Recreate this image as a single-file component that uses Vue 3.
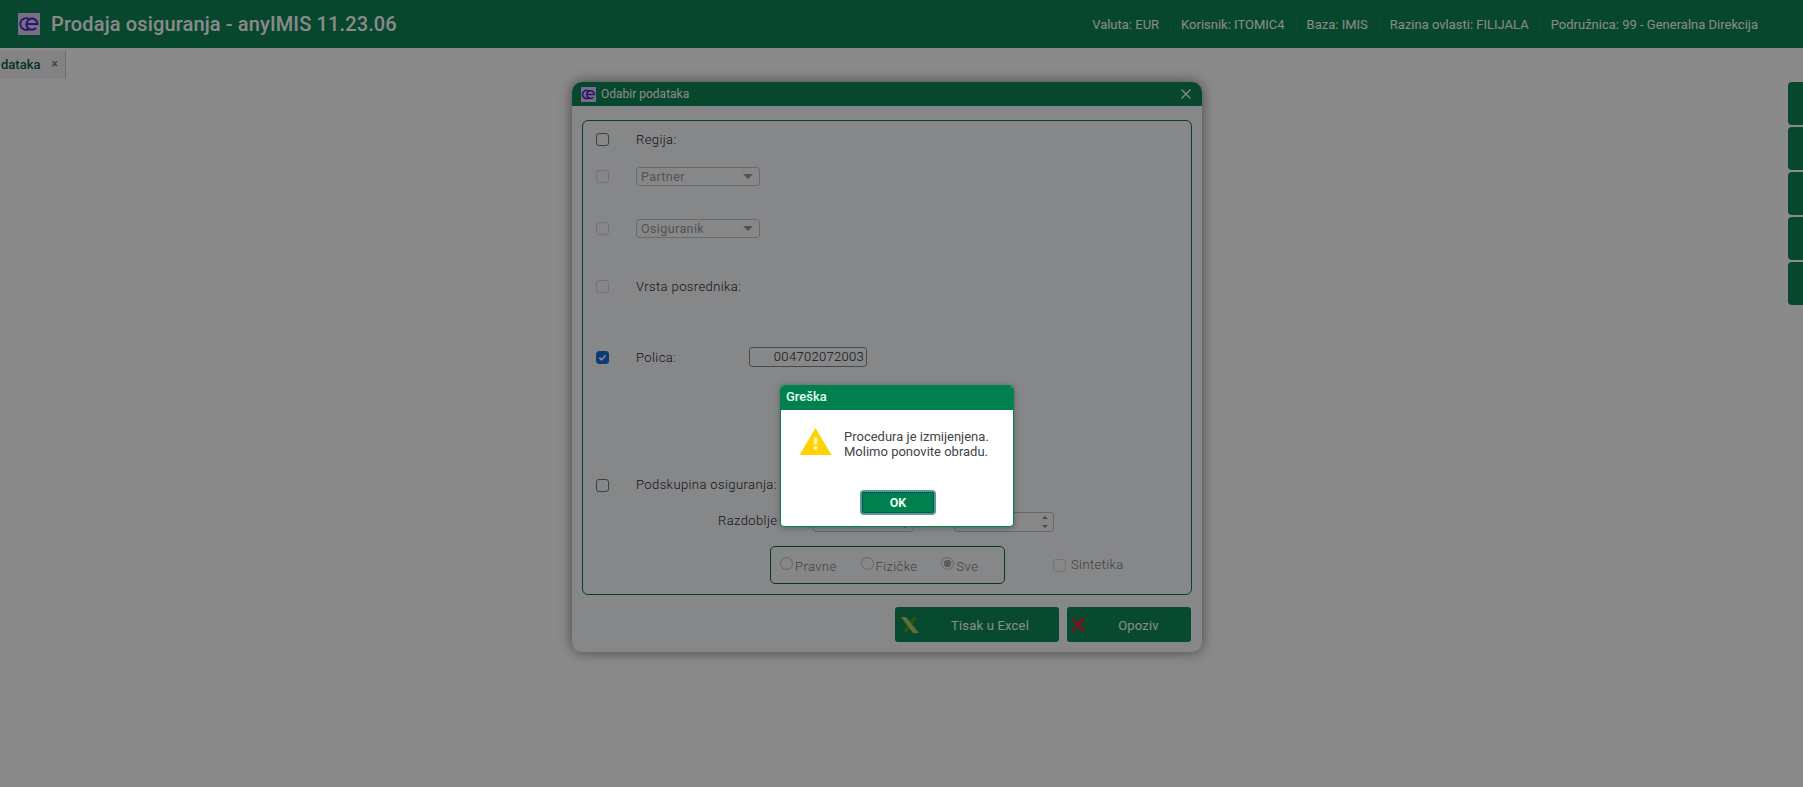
<script setup>
const info = [
  'Valuta: EUR',
  'Korisnik: ITOMIC4',
  'Baza: IMIS',
  'Razina ovlasti: FILIJALA',
  'Podružnica: 99 - Generalna Direkcija'
]
const sideTabs = [1, 2, 3, 4, 5]
</script>

<template>
  <div class="page">
    <header class="topbar">
      <svg class="logo" viewBox="0 0 22 22">
        <rect width="22" height="22" fill="#dccff5" />
        <path d="M11.4 6.2A5.8 5.8 0 1 0 11.4 15.8" fill="none" stroke="#4a2ac8" stroke-width="2" />
        <path d="M8.5 11H19.6A5.6 5.6 0 1 0 18 15" fill="none" stroke="#4a2ac8" stroke-width="2" />
      </svg>
      <h1 class="app-title">Prodaja osiguranja - anyIMIS 11.23.06</h1>
      <ul class="info">
        <li v-for="item in info" :key="item">{{ item }}</li>
      </ul>
    </header>

    <nav class="tabbar">
      <div class="tab">
        <span class="tab-name">dataka</span>
        <span class="tab-x">×</span>
      </div>
    </nav>

    <aside class="side-tabs">
      <div v-for="t in sideTabs" :key="t" class="side-tab"></div>
    </aside>

    <section class="dialog">
      <div class="dialog-head">
        <svg class="logo small" viewBox="0 0 22 22">
          <rect width="22" height="22" fill="#dccff5" />
          <path d="M11.4 6.2A5.8 5.8 0 1 0 11.4 15.8" fill="none" stroke="#4a2ac8" stroke-width="2.4" />
          <path d="M8.5 11H19.6A5.6 5.6 0 1 0 18 15" fill="none" stroke="#4a2ac8" stroke-width="2.4" />
        </svg>
        <span class="dialog-title">Odabir podataka</span>
        <svg class="close" viewBox="0 0 12 12">
          <path d="M1.5 1.5l9 9M10.5 1.5l-9 9" stroke="#fff" stroke-width="1.3" />
        </svg>
      </div>

      <div class="dialog-body">
        <div class="fields">
          <div class="row r1">
            <span class="check"></span>
            <label>Regija:</label>
          </div>
          <div class="row r2">
            <span class="check off"></span>
            <div class="select">Partner<i class="caret"></i></div>
          </div>
          <div class="row r3">
            <span class="check off"></span>
            <div class="select">Osiguranik<i class="caret"></i></div>
          </div>
          <div class="row r4">
            <span class="check off"></span>
            <label>Vrsta posrednika:</label>
          </div>
          <div class="row r5">
            <span class="check on">
              <svg viewBox="0 0 14 14"><path d="M3 7.2l2.8 2.8L11 4.2" fill="none" stroke="#fff" stroke-width="2" /></svg>
            </span>
            <label class="polica-label">Polica:</label>
            <div class="input">004702072003</div>
          </div>
          <div class="row r6">
            <span class="check"></span>
            <label>Podskupina osiguranja:</label>
          </div>
          <div class="row r7">
            <label class="period-label">Razdoblje</label>
            <div class="spin first"><i class="arrow up"></i><i class="arrow down"></i></div>
            <div class="spin"><i class="arrow up"></i><i class="arrow down"></i></div>
          </div>
          <div class="row r8">
            <div class="radios">
              <span class="radio-item"><i class="radio"></i>Pravne</span>
              <span class="radio-item"><i class="radio"></i>Fizičke</span>
              <span class="radio-item"><i class="radio sel"></i>Sve</span>
            </div>
            <span class="check off"></span>
            <label class="muted">Sintetika</label>
          </div>
        </div>

        <div class="actions">
          <button class="act excel">
            <svg class="act-icon xl" viewBox="0 0 20 18">
              <path d="M17 1h-4L3 16l4 1z" fill="#4f9a1e" />
              <path d="M1 1h5l13 16h-6z" fill="#a8cc6e" />
            </svg>
            <span>Tisak u Excel</span>
          </button>
          <button class="act cancel">
            <svg class="act-icon" viewBox="0 0 18 18">
              <path d="M3 3l11 12M14 2L3 15" stroke="#d42a30" stroke-width="3" />
            </svg>
            <span>Opoziv</span>
          </button>
        </div>
      </div>
    </section>

    <div class="overlay"></div>

    <section class="alert">
      <div class="alert-head">Greška</div>
      <div class="alert-body">
        <svg class="warn" viewBox="0 0 34 30">
          <path d="M17 1L33.5 29H.5z" fill="#ffd200" />
          <rect x="15.3" y="11" width="3.6" height="7" fill="#fff3b0" />
          <rect x="15.3" y="20" width="3.6" height="3.6" fill="#fff3b0" />
        </svg>
        <p>Procedura je izmijenjena.<br>Molimo ponovite obradu.</p>
      </div>
      <div class="alert-foot">
        <button class="ok">OK</button>
      </div>
    </section>
  </div>
</template>

<style>
html, body {
  margin: 0;
  background: #fff;
}
</style>

<style scoped>
.page {
  position: relative;
  width: 1803px;
  height: 787px;
  overflow: hidden;
  background: #fff;
  font-family: Roboto, "Liberation Sans", sans-serif;
  color: #222;
}

.topbar {
  height: 48px;
  background: #0c8356;
  display: flex;
  align-items: center;
  padding: 0 45px 0 18px;
  box-sizing: border-box;
}
.logo {
  width: 22px;
  height: 22px;
  flex: none;
}
.logo.small {
  width: 15px;
  height: 15px;
}
.app-title {
  margin: 0 0 0 11px;
  font-size: 20px;
  font-weight: 500;
  letter-spacing: .13px;
  color: #fff;
}
.info {
  margin: 0 0 0 auto;
  padding: 0;
  list-style: none;
  display: flex;
  font-size: 13px;
  color: #fff;
}
.info li + li {
  margin-left: 11px;
  padding-left: 10px;
  border-left: 1px solid rgba(255, 255, 255, .08);
}

.tabbar {
  height: 33px;
  padding-top: 3px;
  box-sizing: border-box;
  background: #fff;
}
.tab {
  width: 66px;
  height: 28px;
  box-sizing: border-box;
  background: #f2f3f6;
  border-right: 1px solid #ccc;
  display: flex;
  align-items: center;
  padding: 0 0 2px 1px;
  font-size: 13px;
  font-weight: 500;
  color: #0a5a3c;
}
.tab-x {
  margin-left: 11px;
  font-size: 12px;
  color: #777;
}

.side-tabs {
  position: absolute;
  right: 0;
  top: 82px;
  display: flex;
  flex-direction: column;
  gap: 2px;
}
.side-tab {
  width: 15px;
  height: 43px;
  background: #0c8356;
  border-radius: 4px 0 0 4px;
}

.dialog {
  position: absolute;
  left: 572px;
  top: 82px;
  width: 630px;
  height: 570px;
  background: #f7fafe;
  border-radius: 10px;
  overflow: hidden;
  box-shadow: 0 0 14px rgba(0, 0, 0, .5);
}
.dialog-head {
  height: 24px;
  background: #0c8356;
  display: flex;
  align-items: center;
  padding: 0 10px 0 9px;
  color: #fff;
  font-size: 12px;
}
.dialog-title {
  margin-left: 5px;
}
.close {
  width: 12px;
  height: 12px;
  margin-left: auto;
}
.dialog-body {
  padding: 14px 10px 0;
}
.fields {
  height: 475px;
  box-sizing: border-box;
  border: 1px solid #0a7550;
  border-radius: 6px;
  padding: 0 13px;
}
.row {
  display: flex;
  align-items: center;
  font-size: 13px;
  font-weight: 300;
  letter-spacing: .4px;
}
.row label {
  color: #1f1f1f;
}
.row .check {
  margin-right: 27px;
}
.r1 { height: 32px; margin-top: 2px; }
.r2 { height: 28px; margin-top: 7px; }
.r3 { height: 28px; margin-top: 24px; }
.r4 { height: 28px; margin-top: 30px; }
.r5 { height: 28px; margin-top: 43px; }
.r6 { height: 28px; margin-top: 99px; }
.r6 .check { margin-top: 2px; }
.r7 { height: 28px; margin-top: 8px; }
.r8 { height: 40px; margin-top: 11px; }

.check {
  width: 11px;
  height: 11px;
  border: 1px solid #777;
  border-radius: 3px;
  flex: none;
  display: flex;
}
.check.off {
  border-color: #d5d5d8;
}
.check.on {
  background: #1a6ed8;
  border-color: #1a6ed8;
}
.check.on svg {
  width: 100%;
  height: 100%;
}

.select {
  width: 124px;
  height: 19px;
  box-sizing: border-box;
  border: 1px solid #c4c4c4;
  border-radius: 3px;
  padding-left: 4px;
  line-height: 17px;
  font-size: 12.5px;
  font-weight: 400;
  color: #999;
  position: relative;
}
.caret {
  position: absolute;
  right: 6px;
  top: 6px;
  border: 5px solid transparent;
  border-top-color: #999;
  border-bottom: 0;
}

.polica-label {
  width: 113px;
}
.input {
  width: 118px;
  height: 20px;
  box-sizing: border-box;
  border: 1px solid #888;
  border-radius: 3px;
  text-align: right;
  padding-right: 2px;
  line-height: 18px;
  font-size: 13px;
  letter-spacing: .3px;
  color: #1f1f1f;
}

.row .period-label {
  margin-left: 122px;
}
.spin {
  width: 100px;
  height: 20px;
  box-sizing: border-box;
  border: 1px solid #c4c4c4;
  border-radius: 3px;
  margin: 4px 0 0 40px;
  position: relative;
}
.spin.first {
  width: 101px;
  margin-left: 36px;
}
.arrow {
  position: absolute;
  right: 5px;
  border: 3px solid transparent;
}
.arrow.up {
  top: 3px;
  border-bottom-color: #888;
  border-top: 0;
}
.arrow.down {
  bottom: 3px;
  border-top-color: #888;
  border-bottom: 0;
}

.radios {
  width: 235px;
  height: 38px;
  box-sizing: border-box;
  margin-left: 174px;
  margin-right: 48px;
  border: 1px solid #0a6b48;
  border-radius: 5px;
  display: flex;
  align-items: center;
  padding-left: 9px;
  gap: 24px;
  color: #777;
}
.radio-item {
  display: flex;
  align-items: center;
  padding-top: 2px;
}
.radio {
  width: 11px;
  height: 11px;
  border: 1px solid #bbb;
  border-radius: 50%;
  margin: -6px 2px 0 0;
}
.radio.sel {
  background: radial-gradient(circle, #aaa 0 3.5px, #f7fafe 4px);
}
.row .muted {
  color: #777;
  margin-top: -2px;
}
.r8 .check {
  margin-right: 5px;
}

.actions {
  display: flex;
  justify-content: flex-end;
  gap: 8px;
  margin-top: 12px;
  padding-right: 1px;
}
.act {
  height: 35px;
  border: 0;
  border-radius: 3px;
  background: #0f8a5a;
  color: #fff;
  font-family: inherit;
  font-size: 13px;
  font-weight: 400;
  letter-spacing: .2px;
  display: flex;
  align-items: center;
  padding: 2px 5px 0;
}
.act span {
  flex: 1;
  text-align: center;
  padding-left: 8px;
}
.act-icon {
  width: 18px;
  height: 18px;
  flex: none;
}
.act-icon.xl {
  width: 20px;
  margin-top: -2px;
}
.excel span {
  padding-left: 6px;
}
.excel { width: 164px; }
.cancel {
  width: 124px;
  padding-left: 3px;
}
.cancel svg {
  margin-top: -2px;
}
.cancel span {
  padding-left: 3px;
}

.overlay {
  position: absolute;
  inset: 0;
  background: rgba(0, 0, 0, .46);
}

.alert {
  position: absolute;
  left: 780px;
  top: 385px;
  width: 234px;
  height: 142px;
  box-sizing: border-box;
  background: #fff;
  border: 1px solid #00804e;
  border-radius: 4px;
  overflow: hidden;
  box-shadow: 0 1px 6px rgba(0, 0, 0, .3);
}
.alert-head {
  height: 24px;
  background: #00804e;
  color: #e6fff2;
  font-size: 13px;
  font-weight: 500;
  line-height: 22px;
  padding-left: 5px;
}
.alert-body {
  display: flex;
  align-items: flex-start;
  padding: 17px 0 0 18px;
  gap: 12px;
}
.warn {
  width: 33px;
  height: 29px;
  flex: none;
}
.alert-body p {
  margin: 2px 0 0;
  font-size: 13px;
  line-height: 15px;
  color: #444;
}
.alert-foot {
  display: flex;
  justify-content: center;
  margin-top: 31px;
  padding-left: 2px;
}
.ok {
  width: 76px;
  height: 25px;
  box-sizing: border-box;
  background: #00804e;
  border: 2px solid #5a9a94;
  border-radius: 4px;
  outline: 1px dotted #0a2a66;
  outline-offset: -3px;
  color: #e6fff2;
  font-family: inherit;
  font-size: 12.5px;
  font-weight: 700;
  padding: 0;
}
</style>
